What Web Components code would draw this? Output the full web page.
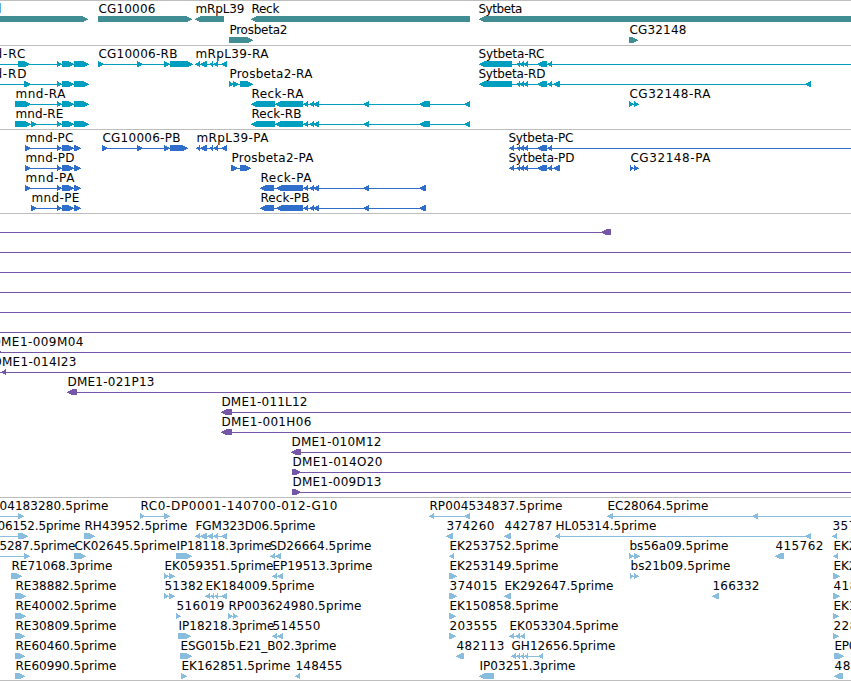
<!DOCTYPE html>
<html lang="en">
<head>
<meta charset="utf-8">
<title>Genome browser</title>
<style>
  body {
    margin: 0;
    background: #fff;
    overflow: hidden;
  }
</style>
</head>
<body>
<genome-view>
  <genome-track name="genes" style="--feature: #408e94; --row: 21px; --pad: 0px"></genome-track>
  <genome-track name="transcripts" style="--feature: #009fc0"></genome-track>
  <genome-track name="proteins" style="--feature: #306ecc"></genome-track>
  <genome-track name="clones" style="--feature: #7657a7"></genome-track>
  <genome-track name="ests" style="--feature: #88bddd; --pad: 2px"></genome-track>
</genome-view>

<script>
(function () {
  // each feature: [label, start, label end, parts]
  // parts: "a>b" forward block, "a<b" reverse block, "a~b" thin line
  const RECK_R = "251<275 275<303 303<308 309<314 313<319 363<369 419<430 464<470";
  const RECK_P = "260<274 276<303 303<308 309<314 313<319 363<369 419<426";
  const MND_END = " 57>62 62>74 74>89";
  const MND_P = " 57>62 62>74 74>81";
  const SYT = " 516<520 519<524 523<528 537<547 547<552";

  const TRACKS = {
    genes: [
      [["mnd", -28, 1, "-10>88"], ["CG10006", 98, 155, "98>192"], ["mRpL39", 195, 244, "195<224"],
       ["Reck", 251, 279, "251<470"], ["Sytbeta", 478, 522, "479<870"]],
      [["Prosbeta2", 229, 287, "229>253"], ["CG32148", 629, 686, "629>638"]]
    ],
    transcripts: [
      [["mnd-RC", -27, 25, "-10~18 18>30" + MND_END], ["CG10006-RB", 98, 177, "98>104 137>143 164>170 170>193"],
       ["mRpL39-RA", 195, 268, "195<200 200<207 209<213 213<218 221<227"],
       ["Sytbeta-RC", 478, 544, "479<512" + SYT + " 552~870"]],
      [["mnd-RD", -27, 26, "-10~24 24>31" + MND_END], ["Prosbeta2-RA", 229, 312, "229>234 233>239 240>253"],
       ["Sytbeta-RD", 478, 545, "479<512" + SYT + " 553<560 805<811"]],
      [["mnd-RA", 15, 65, "15>31" + MND_END], ["Reck-RA", 251, 303, RECK_R],
       ["CG32148-RA", 629, 710, "629>634 634>639"]],
      [["mnd-RE", 15, 63, "15>31 31>37" + MND_END], ["Reck-RB", 251, 301, RECK_R]]
    ],
    proteins: [
      [["mnd-PC", 25, 73, "25>31" + MND_P], ["CG10006-PB", 102, 180, "102>108 137>143 164>170 170>188"],
       ["mRpL39-PA", 196, 268, "196<200 200<207 209<213 213<218 221<227"],
       ["Sytbeta-PC", 508, 573, "509<514" + SYT + " 552~870"]],
      [["mnd-PD", 25, 74, "25>31" + MND_P], ["Prosbeta2-PA", 231, 313, "231>238 240>251"],
       ["Sytbeta-PD", 508, 574, "509<514" + SYT + " 553<560"], ["CG32148-PA", 630, 710, "630>634 634>639"]],
      [["mnd-PA", 25, 74, "25>31" + MND_P], ["Reck-PA", 260, 311, RECK_P]],
      [["mnd-PE", 31, 79, "31>37" + MND_P], ["Reck-PB", 260, 309, RECK_P]]
    ],
    clones: [
      [["", 0, 0, "-5~601 601<611"]],
      [["", 0, 0, "-5~870"]],
      [["", 0, 0, "-5~870"]],
      [["", 0, 0, "-5~870"]],
      [["", 0, 0, "-5~870"]],
      [["", 0, 0, "-5~870"]],
      [["DME1-009M04", -9, 83, "-6>2 2~870"]],
      [["DME1-014I23", -8, 76, "-4>1 1<6 6~870"]],
      [["DME1-021P13", 67, 154, "67<77 77~870"]],
      [["DME1-011L12", 221, 307, "221<232 232~870"]],
      [["DME1-001H06", 221, 311, "221<232 232~870"]],
      [["DME1-010M12", 291, 381, "291<301 301~870"]],
      [["DME1-014O20", 292, 382, "292>301 301~870"]],
      [["DME1-009D13", 292, 381, "292>301 301~870"]]
    ],
    ests: [
      [["04183280.5prime", -1, 108, "-5~18 18>24"], ["RC0-DP0001-140700-012-G10", 140, 337, "140>145 164>170"],
       ["RP004534837.5prime", 429, 562, "429<434 464<470"], ["EC28064.5prime", 607, 708, "607<613 752<758 758~870"]],
      [["06152.5prime", -3, 80, "-5~18 18>28"], ["RH43952.5prime", 84, 187, "84>95"],
       ["FGM323D06.5prime", 195, 315, "195<200 200<207 207<213 213<218 221<227"],
       ["374260", 446, 494, "446<453"], ["442787", 504, 552, "504<511"],
       ["HL05314.5prime", 555, 656, "555<560 805<811"], ["357", 832, 856, "832<837"]],
      [["5287.5prime", -1, 75, "-5~24 24>30"], ["CK02645.5prime", 74, 176, "74>86"],
       ["IP18118.3prime", 176, 271, "176>192"], ["SD26664.5prime", 269, 371, "270<275 275<281"],
       ["EK253752.5prime", 449, 558, "449<454"], ["bs56a09.5prime", 629, 728, "629>634 634>640"],
       ["415762", 775, 823, "775<784"], ["EK2", 833, 856, "833<838"]],
      [["RE71068.3prime", 11, 112, "11>22"], ["EK059351.5prime", 164, 273, "164>169 169>175"],
       ["EP19513.3prime", 272, 372, "272<277 277<283"], ["EK253149.5prime", 449, 558, "449>457"],
       ["bs21b09.5prime", 630, 730, "630>634 634>639"], ["EK2", 833, 856, "833>840"]],
      [["RE38882.5prime", 15, 116, "15>26"], ["51382", 164, 203, "164>169 169>175"],
       ["EK184009.5prime", 205, 314, "205<210 210<214 214<218 221<227"], ["374015", 449, 497, "449>457"],
       ["EK292647.5prime", 504, 613, "504<511"], ["166332", 712, 759, "712<719"], ["418", 833, 857, "833>840"]],
      [["RE40002.5prime", 15, 116, "15>26"], ["516019", 176, 224, "176>181"],
       ["RP003624980.5prime", 228, 361, "228>233 233>238"], ["EK150858.5prime", 449, 558, "449>456"],
       ["EK1", 833, 856, "833>839"]],
      [["RE30809.5prime", 15, 116, "15>25"], ["IP18218.3prime", 178, 274, "178>191"],
       ["514550", 272, 320, "272<277 277<283"], ["203555", 449, 497, "449>456"],
       ["EK053304.5prime", 509, 618, "509<514 515<520 520<525"], ["228", 833, 857, "833>839"]],
      [["RE60460.5prime", 15, 116, "15>25"], ["ESG015b.E21_B02.3prime", 180, 336, "180>192"],
       ["482113", 456, 504, "456<464"], ["GH12656.5prime", 511, 615, "511<516 516<520 520<524 524<528 538<543"],
       ["EP0", 834, 856, "834>844"]],
      [["RE60990.5prime", 15, 116, "15>25"], ["EK162851.5prime", 181, 290, "181>187"],
       ["148455", 295, 342, "295<300"], ["IP03251.3prime", 479, 575, "479<494"], ["48", 834, 850, "834<843"]]
    ]
  };

  // how far each pixel row of a block stops short of its tip
  const TIP = [5, 3, 1, 0, 2, 4];

  class GenomeView extends HTMLElement {
    constructor() {
      super();
      this.attachShadow({ mode: "open" }).innerHTML = `
        <style>
          :host {
            display: flex;
            flex-direction: column;
            box-sizing: border-box;
            width: 851px;
            height: 681px;
            overflow: hidden;
            border-bottom: 1px solid #bebebe;
            font: 12px "DejaVu Sans", sans-serif;
            color: #000;
          }
        </style>
        <slot></slot>
      `;
    }
  }

  class GenomeTrack extends HTMLElement {
    constructor() {
      super();
      this.attachShadow({ mode: "open" }).innerHTML = `
        <style>
          :host {
            display: flex;
            flex-direction: column;
            border-top: 1px solid #bebebe;
            padding-bottom: var(--pad, 3px);
          }
          :host([name=genes]) {
            padding-bottom: 2px;
          }
        </style>
      `;
    }

    connectedCallback() {
      for (let features of TRACKS[this.getAttribute("name")]) {
        let row = document.createElement("feature-row");
        row.features = features;
        this.shadowRoot.appendChild(row);
      }
    }
  }

  class FeatureRow extends HTMLElement {
    constructor() {
      super();
      this.attachShadow({ mode: "open" });
    }

    set features(list) {
      this.shadowRoot.innerHTML = `
        <style>
          :host {
            display: block;
            height: var(--row, 20px);
          }
          svg {
            display: block;
            width: 100%;
            height: 100%;
            overflow: visible;
          }
          path {
            fill: var(--feature);
            shape-rendering: crispEdges;
          }
          text {
            fill: #000;
          }
        </style>
        <svg>${list.map(f => this._feature(f)).join("")}</svg>
      `;
    }

    _feature([label, start, end, parts]) {
      let d = "";
      let last = null;
      for (let part of parts.split(" ")) {
        let [, a, type, b] = part.match(/(-?\d+)([<>~])(-?\d+)/);
        a = Number(a);
        b = Number(b);
        // introns join the blocks
        if (last !== null && a > last) {
          d += this._line(last, a);
        }
        d += type === "~" ? this._line(a, b) : this._block(a, b, type);
        last = b;
      }
      let text = label
        ? `<text x="${start + 0.4}" y="12" textLength="${end - start}">${label}</text>`
        : "";
      return `<path d="${d}"/>${text}`;
    }

    _line(a, b) {
      return `M${a} 18H${b}V19H${a}Z`;
    }

    _block(a, b, type) {
      return TIP.map((inset, i) => {
        inset = Math.min(inset, b - a - 1);
        let x0 = type === "<" ? a + inset : a;
        let x1 = type === ">" ? b - inset : b;
        return `M${x0} ${15 + i}H${x1}V${16 + i}H${x0}Z`;
      }).join("");
    }
  }

  customElements.define("feature-row", FeatureRow);
  customElements.define("genome-track", GenomeTrack);
  customElements.define("genome-view", GenomeView);
})();
</script>
</body>
</html>
